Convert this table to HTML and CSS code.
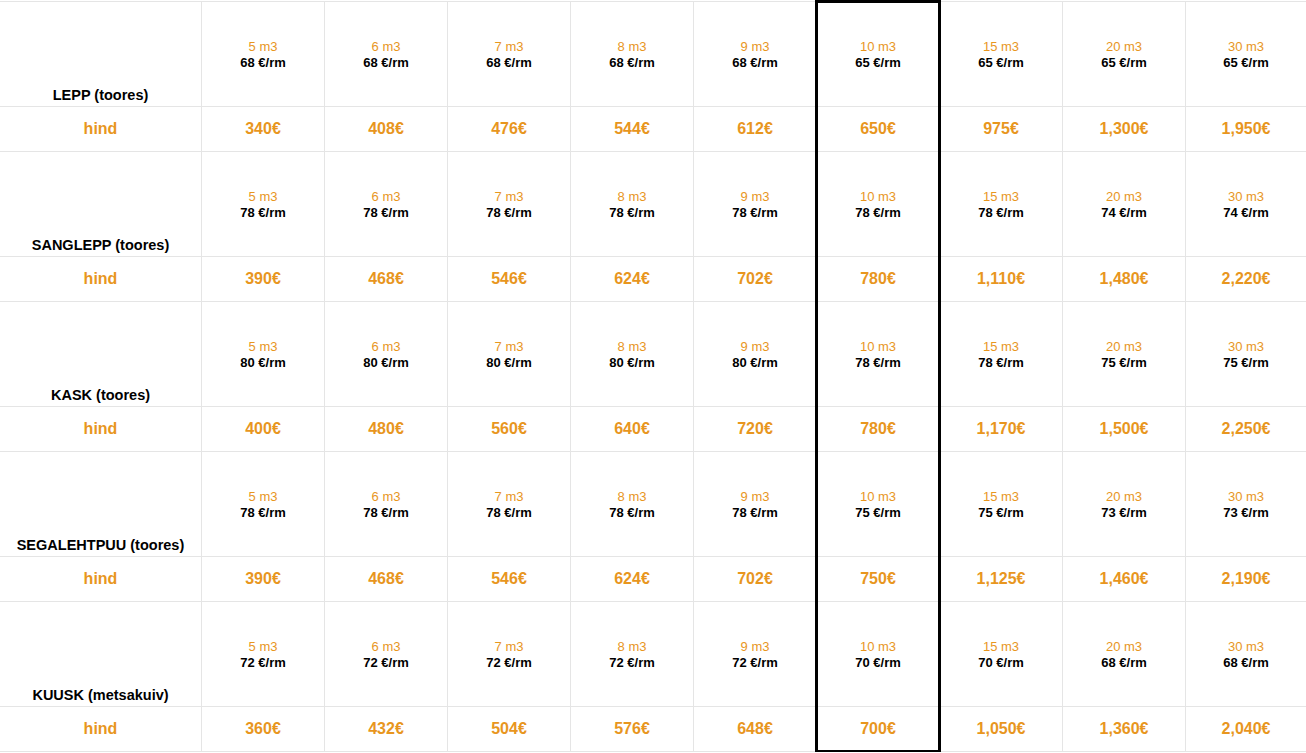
FILE: index.html
```html
<!DOCTYPE html>
<html lang="et">
<head>
<meta charset="utf-8">
<title>Küttepuude hinnad</title>
<link rel="stylesheet" href="styles.css">
</head>
<body>
<div class="prices">
  <div class="cell label">LEPP (toores)</div>
  <div class="cell qty"><span class="vol">5 m3</span><span class="rate">68 €/rm</span></div>
  <div class="cell qty"><span class="vol">6 m3</span><span class="rate">68 €/rm</span></div>
  <div class="cell qty"><span class="vol">7 m3</span><span class="rate">68 €/rm</span></div>
  <div class="cell qty"><span class="vol">8 m3</span><span class="rate">68 €/rm</span></div>
  <div class="cell qty"><span class="vol">9 m3</span><span class="rate">68 €/rm</span></div>
  <div class="cell qty"><span class="vol">10 m3</span><span class="rate">65 €/rm</span></div>
  <div class="cell qty"><span class="vol">15 m3</span><span class="rate">65 €/rm</span></div>
  <div class="cell qty"><span class="vol">20 m3</span><span class="rate">65 €/rm</span></div>
  <div class="cell qty"><span class="vol">30 m3</span><span class="rate">65 €/rm</span></div>
  <div class="cell price">hind</div>
  <div class="cell price">340€</div>
  <div class="cell price">408€</div>
  <div class="cell price">476€</div>
  <div class="cell price">544€</div>
  <div class="cell price">612€</div>
  <div class="cell price">650€</div>
  <div class="cell price">975€</div>
  <div class="cell price">1,300€</div>
  <div class="cell price">1,950€</div>

  <div class="cell label">SANGLEPP (toores)</div>
  <div class="cell qty"><span class="vol">5 m3</span><span class="rate">78 €/rm</span></div>
  <div class="cell qty"><span class="vol">6 m3</span><span class="rate">78 €/rm</span></div>
  <div class="cell qty"><span class="vol">7 m3</span><span class="rate">78 €/rm</span></div>
  <div class="cell qty"><span class="vol">8 m3</span><span class="rate">78 €/rm</span></div>
  <div class="cell qty"><span class="vol">9 m3</span><span class="rate">78 €/rm</span></div>
  <div class="cell qty"><span class="vol">10 m3</span><span class="rate">78 €/rm</span></div>
  <div class="cell qty"><span class="vol">15 m3</span><span class="rate">78 €/rm</span></div>
  <div class="cell qty"><span class="vol">20 m3</span><span class="rate">74 €/rm</span></div>
  <div class="cell qty"><span class="vol">30 m3</span><span class="rate">74 €/rm</span></div>
  <div class="cell price">hind</div>
  <div class="cell price">390€</div>
  <div class="cell price">468€</div>
  <div class="cell price">546€</div>
  <div class="cell price">624€</div>
  <div class="cell price">702€</div>
  <div class="cell price">780€</div>
  <div class="cell price">1,110€</div>
  <div class="cell price">1,480€</div>
  <div class="cell price">2,220€</div>

  <div class="cell label">KASK (toores)</div>
  <div class="cell qty"><span class="vol">5 m3</span><span class="rate">80 €/rm</span></div>
  <div class="cell qty"><span class="vol">6 m3</span><span class="rate">80 €/rm</span></div>
  <div class="cell qty"><span class="vol">7 m3</span><span class="rate">80 €/rm</span></div>
  <div class="cell qty"><span class="vol">8 m3</span><span class="rate">80 €/rm</span></div>
  <div class="cell qty"><span class="vol">9 m3</span><span class="rate">80 €/rm</span></div>
  <div class="cell qty"><span class="vol">10 m3</span><span class="rate">78 €/rm</span></div>
  <div class="cell qty"><span class="vol">15 m3</span><span class="rate">78 €/rm</span></div>
  <div class="cell qty"><span class="vol">20 m3</span><span class="rate">75 €/rm</span></div>
  <div class="cell qty"><span class="vol">30 m3</span><span class="rate">75 €/rm</span></div>
  <div class="cell price">hind</div>
  <div class="cell price">400€</div>
  <div class="cell price">480€</div>
  <div class="cell price">560€</div>
  <div class="cell price">640€</div>
  <div class="cell price">720€</div>
  <div class="cell price">780€</div>
  <div class="cell price">1,170€</div>
  <div class="cell price">1,500€</div>
  <div class="cell price">2,250€</div>

  <div class="cell label">SEGALEHTPUU (toores)</div>
  <div class="cell qty"><span class="vol">5 m3</span><span class="rate">78 €/rm</span></div>
  <div class="cell qty"><span class="vol">6 m3</span><span class="rate">78 €/rm</span></div>
  <div class="cell qty"><span class="vol">7 m3</span><span class="rate">78 €/rm</span></div>
  <div class="cell qty"><span class="vol">8 m3</span><span class="rate">78 €/rm</span></div>
  <div class="cell qty"><span class="vol">9 m3</span><span class="rate">78 €/rm</span></div>
  <div class="cell qty"><span class="vol">10 m3</span><span class="rate">75 €/rm</span></div>
  <div class="cell qty"><span class="vol">15 m3</span><span class="rate">75 €/rm</span></div>
  <div class="cell qty"><span class="vol">20 m3</span><span class="rate">73 €/rm</span></div>
  <div class="cell qty"><span class="vol">30 m3</span><span class="rate">73 €/rm</span></div>
  <div class="cell price">hind</div>
  <div class="cell price">390€</div>
  <div class="cell price">468€</div>
  <div class="cell price">546€</div>
  <div class="cell price">624€</div>
  <div class="cell price">702€</div>
  <div class="cell price">750€</div>
  <div class="cell price">1,125€</div>
  <div class="cell price">1,460€</div>
  <div class="cell price">2,190€</div>

  <div class="cell label">KUUSK (metsakuiv)</div>
  <div class="cell qty"><span class="vol">5 m3</span><span class="rate">72 €/rm</span></div>
  <div class="cell qty"><span class="vol">6 m3</span><span class="rate">72 €/rm</span></div>
  <div class="cell qty"><span class="vol">7 m3</span><span class="rate">72 €/rm</span></div>
  <div class="cell qty"><span class="vol">8 m3</span><span class="rate">72 €/rm</span></div>
  <div class="cell qty"><span class="vol">9 m3</span><span class="rate">72 €/rm</span></div>
  <div class="cell qty"><span class="vol">10 m3</span><span class="rate">70 €/rm</span></div>
  <div class="cell qty"><span class="vol">15 m3</span><span class="rate">70 €/rm</span></div>
  <div class="cell qty"><span class="vol">20 m3</span><span class="rate">68 €/rm</span></div>
  <div class="cell qty"><span class="vol">30 m3</span><span class="rate">68 €/rm</span></div>
  <div class="cell price">hind</div>
  <div class="cell price">360€</div>
  <div class="cell price">432€</div>
  <div class="cell price">504€</div>
  <div class="cell price">576€</div>
  <div class="cell price">648€</div>
  <div class="cell price">700€</div>
  <div class="cell price">1,050€</div>
  <div class="cell price">1,360€</div>
  <div class="cell price">2,040€</div>

  <div class="highlight"></div>
</div>
</body>
</html>
```
FILE: styles.css
```css
html, body {
  margin: 0;
  padding: 0;
  background: #fff;
  overflow: hidden;
}

body {
  font-family: "Liberation Sans", Arial, sans-serif;
  color: #000;
}

.prices {
  position: relative;
  display: grid;
  grid-template-columns: 201px repeat(8, 123px) 121px;
  grid-auto-rows: 105px 45px;
  margin-top: 1px;
  border-top: 1px solid #e5e5e5;
}

.cell {
  display: flex;
  border-bottom: 1px solid #e5e5e5;
  border-left: 1px solid #e5e5e5;
  box-sizing: border-box;
  justify-content: center;
  align-items: center;
  text-align: center;
}

.cell:nth-child(10n + 1) {
  border-left: none;
}

.label {
  align-items: flex-end;
  padding-bottom: 3px;
  font-weight: bold;
  font-size: 14.5px;
}

.qty {
  flex-direction: column;
  font-size: 13px;
  line-height: 16px;
  padding-top: 1px;
}

.vol {
  color: #e8961e;
}

.rate {
  font-weight: bold;
}

.price {
  color: #e8961e;
  font-weight: bold;
  font-size: 16px;
}

.highlight {
  position: absolute;
  grid-column: 7 / 8;
  grid-row: 1 / 11;
  top: -2px;
  bottom: -1px;
  left: -1px;
  right: -2px;
  border: 3px solid #000;
  pointer-events: none;
}
```
